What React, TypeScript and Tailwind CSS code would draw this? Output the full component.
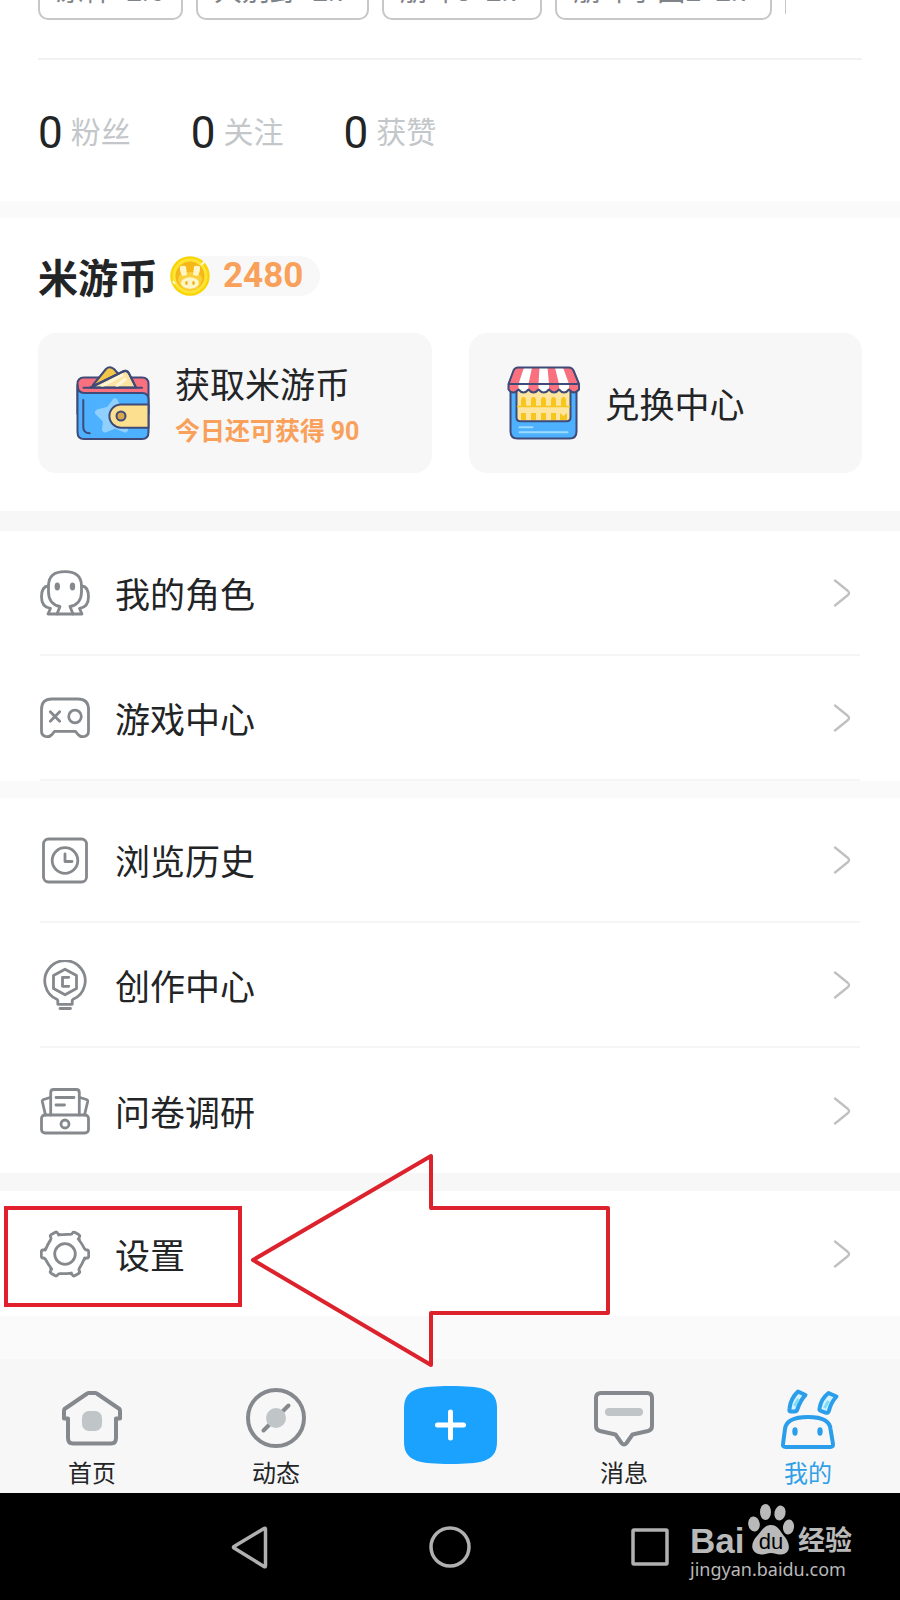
import type { ReactNode } from "react";

const tags = [
  { name: "原神", version: "2.6" },
  { name: "大别野", version: "2.7" },
  { name: "崩坏3", version: "2.7" },
  { name: "崩坏学园2", version: "2.7" },
];

const stats = [
  { value: 0, label: "粉丝" },
  { value: 0, label: "关注" },
  { value: 0, label: "获赞" },
];

const LineIcon = ({ children }: { children: ReactNode }) => (
  <svg
    className="size-[50px] shrink-0 text-[#85888c]"
    viewBox="0 0 50 50"
    fill="none"
    stroke="currentColor"
    strokeWidth="2.800"
    strokeLinecap="round"
    strokeLinejoin="round"
    aria-hidden="true"
  >
    {children}
  </svg>
);

const RoleIcon = () => (
  <LineIcon>
    <path d="M17 46l3-7.500C12 37 8.500 31 8.500 24v-6C8.500 8 14 3.700 25 3.700S41.500 8 41.500 18v6c0 7-3.500 13-11.500 14.500l3 7.500" />
    <path d="M8 18C3 18.500 1.500 23 1.500 29c0 7 3 10.500 9 11.500L8 46h34l-2.500-5.500c6-1 9-4.500 9-11.500 0-6-1.500-10.500-6.500-11" />
    <ellipse cx="17.300" cy="18.500" rx="2.700" ry="4" fill="currentColor" stroke="none" />
    <ellipse cx="32.500" cy="18.500" rx="2.700" ry="4" fill="currentColor" stroke="none" />
  </LineIcon>
);

const GameIcon = () => (
  <LineIcon>
    <path d="M12 6h26q10.500 0 10.500 10.500V38c0 6.500-7.500 7-10.500 3.500L35.500 38.300h-21L12 41.500C9 45 1.500 44.500 1.500 38V16.500Q1.500 6 12 6z" />
    <path d="M10.300 18.800l9.400 9.400M19.700 18.800l-9.400 9.400" />
    <circle cx="35" cy="23.500" r="6.300" />
  </LineIcon>
);

const HistoryIcon = () => (
  <LineIcon>
    <rect x="3.500" y="4" width="43" height="43" rx="5" />
    <circle cx="25" cy="25.500" r="12.800" />
    <path d="M25 19v7.500h7" />
  </LineIcon>
);

const CreateIcon = () => (
  <LineIcon>
    <path d="M17.800 44.300v-3.500q0-1-1-1.500a20.200 20.200 0 1 1 16.400 0q-1 .5-1 1.500v3.500z" />
    <path d="M25 9.200l11.500 6.300v13L25 34.800l-11.500-6.300v-13z" />
    <path d="M28.800 17.300h-6.300v9h6.300M20 48.500h10.500" />
  </LineIcon>
);

const SurveyIcon = () => (
  <LineIcon>
    <rect x="1.500" y="29" width="47" height="18" rx="3.500" />
    <circle cx="25" cy="38" r="4" />
    <path d="M10.700 29V6.500q0-3 3-3h22.600q3 0 3 3V29M16 11.500h18M16 19h8.500" />
    <path d="M10 11.500l-6.300 2q-1.600.6-1.400 2L5.500 29M40 11.500l6.300 2q1.600.6 1.400 2L44.500 29" />
  </LineIcon>
);

const SettingsIcon = () => (
  <LineIcon>
    <circle cx="25" cy="25" r="10.300" />
    {[0, 60, 120, 180, 240, 300].map((angle) => (
      <path
        key={angle}
        transform={`translate(25 25) rotate(${angle})`}
        d="M13.300-15Q17.200-10 19.600-5.200 20.500-3.800 22-4T23.700-2V2Q23.700 4.200 22 4T19.600 5.200"
      />
    ))}
  </LineIcon>
);

const WalletIcon = () => (
  <svg className="size-[74px] shrink-0" viewBox="0 0 74 74" fill="none" stroke="#3f4a78" strokeWidth="2" strokeLinejoin="round" strokeLinecap="round" aria-hidden="true">
    <path d="M1.500 18q0-6.500 6.500-6.500h58q6.500 0 6.500 6.500v30h-71z" fill="#f9717f" />
    <path d="M17 19L30 3q3.500-3.500 8 0l7 8v10z" fill="#f3c64a" />
    <path d="M14.500 21.500L47 5.500q4-2 6 2l7 14z" fill="#fbe3a2" />
    <path d="M25 20.500l22-12M40 20.500l10-8" stroke="#fff6d8" strokeWidth="3" strokeLinecap="butt" />
    <path d="M14.500 21.500L47 5.500q4-2 6 2l7 14M7.500 21.700H66" />
    <path d="M1.500 19q0 8 7 8H66q6.500 0 6.500 6.500V66q0 7-6.500 7H8q-6.500 0-6.500-7z" fill="#4db1ff" />
    <path d="M39 35.500l4 8 9 2-5 8 2 10-10-4-10 4 1-9-8-8 11-3z" fill="#8fd0ff" stroke="#8fd0ff" strokeWidth="6" />
    <path d="M72.500 38.500H45a11.500 11.500 0 0 0 0 23.200h27.500z" fill="#fddf90" />
    <circle cx="45" cy="50" r="4.500" fill="#d9a549" />
    <path d="M7.300 34v27q0 6.300 6.500 6.300" />
  </svg>
);

const ShopIcon = () => (
  <svg className="size-[74px] shrink-0" viewBox="0 0 74 74" fill="none" stroke="#3f4a78" strokeWidth="2" strokeLinejoin="round" strokeLinecap="round" aria-hidden="true">
    <path d="M4.500 22h66v43.500q0 7-7 7h-52q-7 0-7-7z" fill="#4db1ff" />
    <path d="M10.500 22h54v29.500q0 3.800-3.800 3.800H14.300q-3.800 0-3.800-3.800z" fill="#fde49f" />
    <path d="M15 40v-5q0-4 2.500-4t2.500 4v5zM25 40v-5q0-4 2.500-4t2.500 4v5zM35 40v-5q0-4 2.500-4t2.500 4v5zM45 40v-5q0-4 2.500-4t2.500 4v5zM55 40v-5q0-4 2.500-4t2.500 4v5zM15 54v-7h5v7zM25 54v-7h5v7zM35 54v-7h5v7zM45 54v-7h5v7zM54 54v-7l3.500 3 3.500-3v7z" fill="#f8c51c" stroke="none" />
    <path d="M11.500 40.500h52" stroke="#f8c51c" strokeWidth="1.500" />
    <path d="M13.500 61.200H26.500M13.500 66.300h48" stroke="#9edcff" />
    <path d="M12 1.500h51q3 0 4.500 3L73 18v5.500q-5 6-10 0-5 6-10 0-5 6-10 0-5 6-10.500 0-5 6-10 0-5 6-10 0-5.500 6-10 0V18L7.500 4.500Q9 1.500 12 1.500z" fill="#fff" stroke="none" />
    <g fill="#f9717f" stroke="none">
      <path d="M12 1.500h6L12.500 18v5.500q-5 6-10 0V18L7.500 4.500z" />
      <path d="M26 1.500h7.500L32.500 18v5.500q-5 6-10 0V18z" />
      <path d="M41.500 1.500H49L53 18v5.500q-5 6-10 0V18z" />
      <path d="M57 1.500h6q3 0 4.500 3L73 18v5.500q-5 6-10 0V18z" />
    </g>
    <path d="M12 1.500h51q3 0 4.500 3L73 18v5.500q-5 6-10 0-5 6-10 0-5 6-10 0-5 6-10.500 0-5 6-10 0-5 6-10 0-5.500 6-10 0V18L7.500 4.500Q9 1.500 12 1.500zM2.500 18H73" />
  </svg>
);

const CoinIcon = () => (
  <svg className="size-10" viewBox="0 0 40 40" aria-hidden="true">
    <circle cx="20" cy="20" r="19.700" fill="#f8d400" />
    <circle cx="20" cy="20" r="17.500" fill="#ffe436" />
    <circle cx="20" cy="20" r="14.500" fill="#f5b818" />
    <path d="M8 24q0-8 12-8t12 8q-2 10-12 10T8 24z" fill="#fad03c" />
    <path d="M10 10.500q3.500-1.500 6 0l1 8.500-4.500 1q-3-4-2.500-9.500zM30 10.500q-3.500-1.500-6 0l-1 8.500 4.500 1q3-4 2.500-9.500z" fill="#fff6c8" />
    <ellipse cx="20" cy="27" rx="9" ry="5.800" fill="#fff6c8" />
    <ellipse cx="16.500" cy="27" rx="1.300" ry="2" fill="#f0b01c" />
    <ellipse cx="23.500" cy="27" rx="1.300" ry="2" fill="#f0b01c" />
    <path d="M31 9l4-4M3 25l2 3" stroke="#fffbd8" strokeWidth="2" />
  </svg>
);

const Chevron = () => (
  <svg className="h-7 w-[18px]" viewBox="0 0 18 28" fill="none" stroke="#c0c0c2" strokeWidth="2.300" strokeLinecap="round" strokeLinejoin="round" aria-hidden="true">
    <path d="M2 1.500l13 10.500q2 2 0 4L2 26.500" />
  </svg>
);

const MenuRow = ({ icon, label, divider }: { icon: ReactNode; label: string; divider?: boolean }) => (
  <a href="#" className="block px-10">
    <span
      className={
        divider
          ? "flex h-[125px] items-center border-b-2 border-[#f5f5f6] pr-[9px]"
          : "flex h-[125px] items-center pr-[9px]"
      }
    >
      {icon}
      <span className="ml-[25px] flex-1 text-[35px] leading-10">{label}</span>
      <Chevron />
    </span>
  </a>
);

const TabIcon = ({ children }: { children: ReactNode }) => (
  <svg className="size-16" viewBox="0 0 64 64" fill="none" stroke="#85898d" strokeWidth="4" strokeLinejoin="round" strokeLinecap="round" aria-hidden="true">
    {children}
  </svg>
);

const Tab = ({ icon, label, active }: { icon: ReactNode; label: string; active?: boolean }) => (
  <a href="#" className="flex flex-1 flex-col items-center gap-1.5">
    {icon}
    <span className={active ? "text-2xl leading-8 text-[#2f9fe8]" : "text-2xl leading-8"}>{label}</span>
  </a>
);

const Watermark = () => (
  <div className="absolute top-[10px] right-[48px] w-[162px] text-[#b9b9b9]">
    <div className="flex h-[54px] items-end justify-between">
      <span className="font-['Liberation_Sans',sans-serif] text-[35px] leading-8 font-bold">Bai</span>
      <svg className="h-[54px] w-[48px]" viewBox="0 0 48 54" fill="currentColor" aria-hidden="true">
        <ellipse cx="7" cy="21" rx="5.800" ry="7.500" transform="rotate(-8 7 21)" />
        <ellipse cx="18.500" cy="9" rx="5.500" ry="8" />
        <ellipse cx="33" cy="10" rx="5.500" ry="7.500" transform="rotate(12 33 10)" />
        <ellipse cx="41.500" cy="24" rx="5.500" ry="7.500" transform="rotate(8 41.500 24)" />
        <path d="M24 22c7 0 9 6 13 11 5 5 9 17-3 18.500-4 .5-6-1.500-10-1.500s-6 2-10 1.500C2 50 4 39 10 33c5-5 7-11 14-11z" />
        <text x="24" y="46" textAnchor="middle" fill="#000" className="font-['Liberation_Sans',sans-serif] text-[22px]">
          du
        </text>
      </svg>
      <span className="font-['Roboto','Noto_Sans_CJK_SC',sans-serif] text-[27px] leading-8 font-bold">经验</span>
    </div>
    <p className="font-['Noto_Sans',sans-serif] text-lg leading-6">jingyan.baidu.com</p>
  </div>
);

export default function App() {
  return (
    <div className="w-full overflow-hidden bg-white font-['Noto_Sans_CJK_SC',sans-serif] text-[#222426]">
      <header className="px-[38px] font-['Roboto','Noto_Sans_CJK_SC',sans-serif]">
        <div className="-mt-9 flex gap-[13px] border-b-2 border-[#f2f2f3] pb-[38px]">
          {tags.map((tag) => (
            <span
              key={tag.name}
              className="flex h-14 items-center gap-3.5 rounded-[10px] border-2 border-[#c6c7c9] px-4 text-[28px] leading-8 whitespace-nowrap text-[#808388]"
            >
              <span>{tag.name}</span>
              <span>{tag.version}</span>
            </span>
          ))}
          <span className="h-[50px] border-l border-[#c6c7c9]" />
        </div>
        <div className="flex h-[141px] items-center gap-[60px] pt-1">
          {stats.map((stat) => (
            <div key={stat.label} className="flex items-center gap-2">
              <span className="text-[44px] leading-[52px]">{stat.value}</span>
              <span className="text-[30px] leading-10 text-[#c3c7ca]">{stat.label}</span>
            </div>
          ))}
        </div>
      </header>

      <div className="h-[17px] bg-[#fafafa]" />

      <section className="px-[38px] pt-[38px] pb-[38px]">
        <div className="flex items-center">
          <h2 className="text-[40px] leading-10 font-bold">米游币</h2>
          <div className="ml-3 flex h-10 items-center gap-[13px] rounded-full bg-[#f8f8f8] pr-[17px]">
            <CoinIcon />
            <span className="font-['Roboto',sans-serif] text-[35px] leading-10 font-bold text-[#f9a05a]">2480</span>
          </div>
        </div>
        <div className="mt-[37px] grid grid-cols-2 gap-[37px]">
          <a href="#" className="flex h-[140px] items-center gap-[25px] rounded-[18px] bg-[#f7f7f7] pl-[38px]">
            <WalletIcon />
            <span className="flex flex-col gap-2.5 pt-1">
              <span className="text-[35px] leading-10">获取米游币</span>
              <span className="text-[25px] leading-8 font-bold text-[#f9a05a]">
                今日还可获得 <span className="font-['Roboto',sans-serif]">90</span>
              </span>
            </span>
          </a>
          <a href="#" className="flex h-[140px] items-center gap-[25px] rounded-[18px] bg-[#f7f7f7] pl-[37px]">
            <ShopIcon />
            <span className="text-[35px] leading-10">兑换中心</span>
          </a>
        </div>
      </section>

      <div className="h-5 bg-[#f7f7f7]" />

      <nav aria-label="菜单">
        <MenuRow icon={<RoleIcon />} label="我的角色" divider />
        <MenuRow icon={<GameIcon />} label="游戏中心" divider />
        <div className="h-[17px] bg-[#fafafa]" />
        <MenuRow icon={<HistoryIcon />} label="浏览历史" divider />
        <MenuRow icon={<CreateIcon />} label="创作中心" divider />
        <MenuRow icon={<SurveyIcon />} label="问卷调研" />
        <div className="h-[18px] bg-[#f7f7f7]" />
        <div className="relative">
          <MenuRow icon={<SettingsIcon />} label="设置" />
          <div className="pointer-events-none absolute top-[15px] left-1 h-[101px] w-[238px] border-4 border-[#e0202c]" />
          <svg
            className="pointer-events-none absolute -top-10 left-[250px] h-[220px] w-[362px]"
            viewBox="0 0 362 220"
            fill="none"
            stroke="#dc222d"
            strokeWidth="4"
            strokeLinejoin="round"
            aria-hidden="true"
          >
            <path d="M3 109L181 5v52h177v105H181v52z" />
          </svg>
        </div>
      </nav>

      <div className="h-[43px] bg-[#fafafa]" />

      <nav className="flex h-[134px] items-start bg-[#f7f7f7] pt-[27px]" aria-label="主导航">
        <Tab
          label="首页"
          icon={
            <TabIcon>
              <path d="M28.500 7h7q1 0 2 1L59.500 23q.5.500.5 2v7.500H56V52q0 5.500-5 5.500H13q-5 0-5-5.500V32.500H4V25q0-1.500.5-2l22-15q1-1 2-1z" />
              <rect x="22" y="25" width="20" height="20" rx="7" fill="#c0c5c7" stroke="none" />
            </TabIcon>
          }
        />
        <Tab
          label="动态"
          icon={
            <TabIcon>
              <circle cx="32" cy="32" r="28" />
              <path d="M19.500 44.500l25-25" />
              <circle cx="32" cy="32" r="10" fill="#c0c5c7" stroke="none" />
            </TabIcon>
          }
        />
        <div className="flex w-[164px] justify-center">
          <button type="button" aria-label="发布">
            <svg className="h-[78px] w-[93px]" viewBox="0 0 93 78" fill="none" aria-hidden="true">
              <path d="M46.500 0C62 0 73 1 78 2.500 88 5.500 93 11 93 22v34c0 11-5 16.500-15 19.500C73 77 62 78 46.500 78S20 77 15 75.500C5 72.500 0 67 0 56V22C0 11 5 5.500 15 2.500 20 1 31 0 46.500 0z" fill="#1ba2ff" />
              <path d="M46.500 26v26M33.500 39h26" stroke="#fff" strokeWidth="5" strokeLinecap="round" />
            </svg>
          </button>
        </div>
        <Tab
          label="消息"
          icon={
            <TabIcon>
              <path d="M9 7h46q5 0 5 5v28q0 4-4 5l-15.500 3.500-6 8.500q-2.500 3-5 0l-6-8.500L8 45q-4-1-4-5V12q0-5 5-5z" />
              <path d="M17 26h30" stroke="#c0c5c7" strokeWidth="8" />
            </TabIcon>
          }
        />
        <Tab
          label="我的"
          active
          icon={
            <svg className="size-16" viewBox="0 0 64 64" fill="none" stroke="#2a9eea" strokeWidth="4" strokeLinejoin="round" aria-hidden="true">
              <path d="M9 43Q10.500 31 32 31T54.500 43L57 58q.3 3-2.500 3h-45Q6.500 61 7 58z" />
              <path d="M22 5.500l7.500 3.500q-5 5-8 14-.6 2.500-3 2.500h-4q-1.500 0-1-3 1-10 8.500-17z" fill="#d2f2ff" />
              <path d="M52.500 7l8 3.500q-5.500 6-7.500 14-.7 3-3.500 2.200l-4.500-1.700q-2-.8-1.400-3Q45 13 52.500 7z" fill="#d2f2ff" />
              <path d="M18.500 20l4-7M48.500 22l4-7" stroke="#7fdcf5" strokeWidth="3" />
              <ellipse cx="19" cy="45.500" rx="2.700" ry="4.200" fill="#2a9eea" stroke="none" />
              <ellipse cx="44" cy="45.500" rx="2.700" ry="4.200" fill="#2a9eea" stroke="none" />
            </svg>
          }
        />
      </nav>

      <footer className="relative flex h-[107px] items-center justify-center gap-[156px] bg-black">
        <button type="button" aria-label="返回">
          <svg className="size-11" viewBox="0 0 44 44" fill="none" stroke="#b0b0b0" strokeWidth="3.500" strokeLinejoin="round" aria-hidden="true">
            <path d="M36 3.500q1.500-1 1.500 1v36q0 2-1.500 1L6 23q-1.200-.8 0-1.600z" />
          </svg>
        </button>
        <button type="button" aria-label="主屏幕">
          <svg className="size-11" viewBox="0 0 44 44" fill="none" stroke="#b0b0b0" strokeWidth="3.500" aria-hidden="true">
            <circle cx="22" cy="22" r="19" />
          </svg>
        </button>
        <button type="button" aria-label="最近任务">
          <svg className="size-11" viewBox="0 0 44 44" fill="none" stroke="#b0b0b0" strokeWidth="3.500" aria-hidden="true">
            <rect x="5" y="5" width="34" height="34" rx="1" />
          </svg>
        </button>
        <Watermark />
      </footer>
    </div>
  );
}
